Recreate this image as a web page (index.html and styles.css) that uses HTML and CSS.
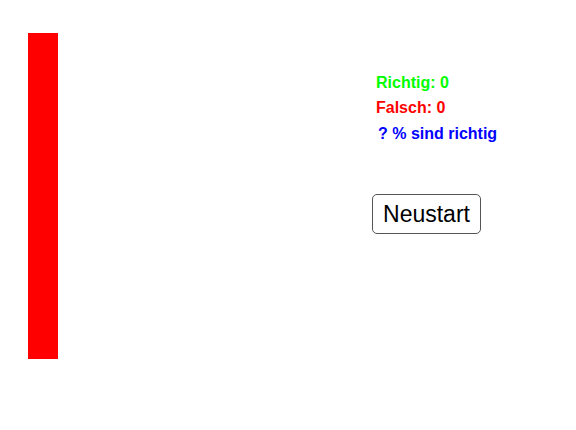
FILE: index.html
```html
<!DOCTYPE html>
<html>
<head>
<meta charset="utf-8">
<link rel="stylesheet" href="styles.css">
</head>
<body>
<div class="page">
  <div class="bar"></div>
  <div class="panel">
    <div class="line right">Richtig: 0</div>
    <div class="line wrong">Falsch: 0</div>
    <div class="line pct">? % sind richtig</div>
    <button class="restart">Neustart</button>
  </div>
</div>
</body>
</html>
```
FILE: styles.css
```css
html, body {
  margin: 0;
  padding: 0;
  background: #ffffff;
}
.page {
  display: flex;
  align-items: flex-start;
  width: 576px;
  height: 430px;
  font-family: "Liberation Sans", Arial, sans-serif;
}
.bar {
  width: 30px;
  height: 326px;
  margin-left: 28px;
  margin-top: 33px;
  background: #ff0000;
}
.panel {
  display: flex;
  flex-direction: column;
  align-items: flex-start;
  margin-left: 318px;
  margin-top: 70px;
}
.line {
  font-size: 16px;
  font-weight: bold;
  line-height: 25px;
  white-space: nowrap;
}
.right { color: #00ff00; }
.wrong { color: #ff0000; }
.pct { color: #0000ff; padding-left: 2px; margin-top: 1px; }
.restart {
  margin-top: 48px;
  margin-left: -4px;
  width: 109px;
  height: 40px;
  padding: 0;
  font-family: "Liberation Sans", Arial, sans-serif;
  font-size: 23px;
  color: #000000;
  background: #ffffff;
  border: 1px solid #555555;
  border-radius: 5px;
}
```
